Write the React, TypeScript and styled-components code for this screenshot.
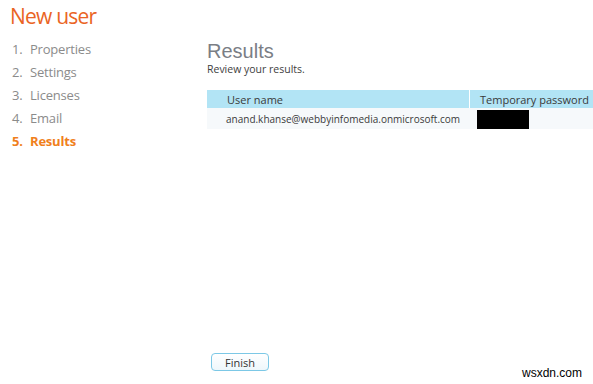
import styled, { createGlobalStyle } from 'styled-components';

const GlobalStyle = createGlobalStyle`
  html, body {
    margin: 0;
    padding: 0;
    background: #ffffff;
  }
  body {
    font-family: 'Open Sans', 'Noto Sans', sans-serif;
  }
`;

const Page = styled.div`
  position: relative;
  width: 593px;
  height: 384px;
  overflow: hidden;
  display: flex;
  flex-direction: column;
  background: #fff;
`;

const Title = styled.h1`
  margin: 0;
  padding: 2px 0 0 10px;
  height: 30px;
  font-size: 21px;
  font-weight: 400;
  letter-spacing: -0.8px;
  color: #ea6424;
`;

const Body = styled.div`
  flex: 1;
  display: flex;
`;

const Steps = styled.ol`
  list-style: none;
  margin: 0;
  padding: 8px 0 0 12px;
  width: 195px;
  display: flex;
  flex-direction: column;
  gap: 5px;
`;

const Step = styled.li<{ active?: boolean }>`
  display: flex;
  height: 18px;
  align-items: center;
  font-size: 13px;
  letter-spacing: -0.2px;
  font-weight: ${({ active }) => (active ? 700 : 400)};
  color: ${({ active }) => (active ? '#f0801c' : '#8b8b8b')};
`;

const StepNo = styled.span`
  width: 18px;
`;

const Main = styled.div`
  flex: 1;
  display: flex;
  flex-direction: column;
  padding: 8px 0 13px;
`;

const Heading = styled.h2`
  margin: 0;
  height: 22px;
  line-height: 23px;
  font-family: 'Liberation Sans', Arial, sans-serif;
  font-size: 20px;
  font-weight: 400;
  color: #7a7e85;
`;

const Lead = styled.p`
  margin: 0 0 11px;
  height: 17px;
  font-size: 10.5px;
  color: #3e3e3e;
`;

const Table = styled.div`
  display: grid;
  grid-template-columns: 262px 1fr;
  margin-right: -20px;
`;

const HeadCell = styled.div<{ divider?: boolean }>`
  height: 18px;
  display: flex;
  align-items: center;
  padding-left: ${({ divider }) => (divider ? '10px' : '20px')};
  background: #b2e4f5;
  border-left: ${({ divider }) => (divider ? '1px solid #ffffff' : 'none')};
  font-size: 11px;
  color: #3a3a3a;
  white-space: nowrap;
`;

const Cell = styled.div<{ divider?: boolean }>`
  height: 21px;
  display: flex;
  align-items: center;
  padding-left: ${({ divider }) => (divider ? '8px' : '19px')};
  background: #f6f9fb;
  font-size: 10px;
  color: #3a3a3a;
  white-space: nowrap;
`;

const Redacted = styled.div`
  width: 52px;
  height: 19px;
  margin-top: 1px;
  background: #000;
`;

const FinishButton = styled.button`
  margin-top: auto;
  margin-left: 4px;
  width: 58px;
  height: 18px;
  padding: 0;
  border: 1px solid #7cc8e6;
  border-radius: 4px;
  background: linear-gradient(#ffffff, #eef7fb);
  font-family: inherit;
  font-size: 11px;
  color: #333;
`;

const Watermark = styled.div`
  position: absolute;
  right: 11px;
  bottom: 4px;
  font-family: 'Liberation Sans', Arial, sans-serif;
  font-size: 12px;
  color: #000;
`;

const steps = ['Properties', 'Settings', 'Licenses', 'Email', 'Results'];

const App = () => (
  <>
    <GlobalStyle />
    <Page>
      <Title>New user</Title>
      <Body>
        <Steps>
          {steps.map((name, i) => (
            <Step key={name} active={i === steps.length - 1}>
              <StepNo>{`${i + 1}.`}</StepNo>
              {name}
            </Step>
          ))}
        </Steps>
        <Main>
          <Heading>Results</Heading>
          <Lead>Review your results.</Lead>
          <Table>
            <HeadCell>User name</HeadCell>
            <HeadCell divider>Temporary password</HeadCell>
            <Cell>anand.khanse@webbyinfomedia.onmicrosoft.com</Cell>
            <Cell divider>
              <Redacted />
            </Cell>
          </Table>
          <FinishButton>Finish</FinishButton>
        </Main>
      </Body>
      <Watermark>wsxdn.com</Watermark>
    </Page>
  </>
);

export default App;
